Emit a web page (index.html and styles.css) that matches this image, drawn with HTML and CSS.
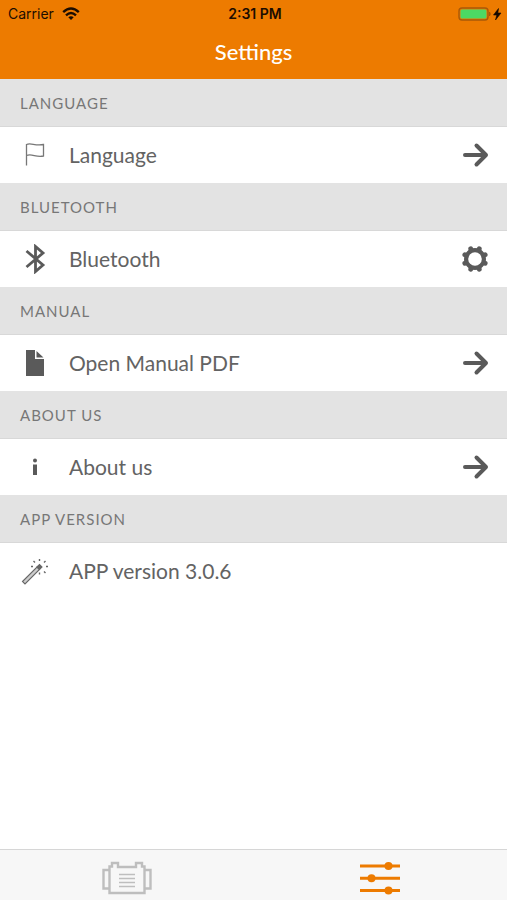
FILE: index.html
```html
<!DOCTYPE html>
<html lang="en">
<head>
<meta charset="utf-8">
<meta name="viewport" content="width=device-width, initial-scale=1">
<title>Settings</title>
<link rel="stylesheet" href="styles.css">
</head>
<body>
<header class="top">
  <div class="status">
    <div class="carrier">
      <span>Carrier</span>
      <svg width="18" height="14" viewBox="0 0 18 14" fill="none" stroke="#1c0d00" stroke-width="2.4"><path d="M1.200 5.200Q9-2 16.800 5.200M4 8.300Q9 3.800 14 8.300"/><path d="M6.300 10.300Q9 8 11.700 10.300L9 13Z" fill="#1c0d00" stroke="none"/></svg>
    </div>
    <time class="clock">2:31 PM</time>
    <div class="power">
      <svg width="44" height="16" viewBox="0 0 44 16"><rect x="1" y="2" width="29" height="12" rx="3" fill="none" stroke="#a85a08" stroke-width="1.4"/><rect x="2.5" y="3.5" width="26" height="9" rx="1.5" fill="#4cd964"/><path d="M31.500 6Q33 8 31.500 10Z" fill="#a85a08" stroke="#a85a08"/><path d="M40.500 2.500L35.500 9H38.800L37.500 14L43 7H39.800Z" fill="#140900" stroke="#140900" stroke-width="0.6"/></svg>
    </div>
  </div>
  <h1 class="title">Settings</h1>
</header>
<main class="content">
  <section>
    <h2 class="heading">LANGUAGE</h2>
    <button class="row" type="button">
      <svg class="icon" viewBox="0 0 28 30" fill="none" stroke="#777" stroke-width="1.3"><path d="M5.500 25.500V4.500C10 2.500 14 6.200 22.500 4.500V16C15 17.700 11 13.300 5.500 15.500"/></svg>
      <span class="label">Language</span>
      <svg class="icon" viewBox="0 0 28 30" fill="none" stroke="#5a5a5a" stroke-width="4" stroke-linecap="round" stroke-linejoin="round"><path d="M4 15H24M15.500 5.500L25 15L15.500 24.500"/></svg>
    </button>
  </section>
  <section>
    <h2 class="heading">BLUETOOTH</h2>
    <button class="row" type="button">
      <svg class="icon" viewBox="0 0 28 30" fill="none" stroke="#5a5a5a" stroke-width="2.8"><path d="M5.500 7L22 21L14.500 27.500V2.500L22 9L5.500 23"/></svg>
      <span class="label">Bluetooth</span>
      <svg class="icon" viewBox="0 0 28 30" fill="none" stroke="#5a5a5a"><circle cx="14" cy="15" r="8.8" stroke-width="4.400"/><path d="M18.200 4.900L9.800 25.100M9.800 4.900L18.200 25.100M3.900 10.800L24.100 19.200M3.900 19.200L24.100 10.800" stroke-width="5" stroke-linecap="round"/><circle cx="14" cy="15" r="6.8" fill="#fff" stroke="none"/></svg>
    </button>
  </section>
  <section>
    <h2 class="heading">MANUAL</h2>
    <button class="row" type="button">
      <svg class="icon" viewBox="0 0 28 30" fill="#5a5a5a"><path d="M5 2H14V11H23V28H5ZM15.500 3L22.500 9.500H15.500Z"/></svg>
      <span class="label">Open Manual PDF</span>
      <svg class="icon" viewBox="0 0 28 30" fill="none" stroke="#5a5a5a" stroke-width="4" stroke-linecap="round" stroke-linejoin="round"><path d="M4 15H24M15.500 5.500L25 15L15.500 24.500"/></svg>
    </button>
  </section>
  <section>
    <h2 class="heading">ABOUT US</h2>
    <button class="row" type="button">
      <svg class="icon" viewBox="0 0 28 30" fill="#5a5a5a"><circle cx="14" cy="8.500" r="2"/><path d="M12 12.500H16V23H12Z"/></svg>
      <span class="label">About us</span>
      <svg class="icon" viewBox="0 0 28 30" fill="none" stroke="#5a5a5a" stroke-width="4" stroke-linecap="round" stroke-linejoin="round"><path d="M4 15H24M15.500 5.500L25 15L15.500 24.500"/></svg>
    </button>
  </section>
  <section>
    <h2 class="heading">APP VERSION</h2>
    <div class="row">
      <svg class="icon" viewBox="0 0 28 30" fill="none" stroke="#666" stroke-width="1.1"><path d="M1.500 25.500L16 11L18.500 13.500L4 28Z" fill="#ccc"/><path d="M16 11L18.500 8.500L21 11L18.500 13.500Z" fill="#666"/><path d="M18.500 3V5M12.500 5L14 6.500M10 10.500H12M24.500 5L23 6.500M25 10.500H27M23 15.500L24.500 17M18.500 16.500V18.500" stroke-width="1.4"/></svg>
      <span class="label">APP version 3.0.6</span>
    </div>
  </section>
</main>
<nav class="tabs">
  <button class="tab" type="button" aria-label="Device">
    <svg width="52" height="36" viewBox="0 0 52 36" fill="none" stroke="#bebebe" stroke-width="2.4"><path d="M8.500 33V6.500H11V3H17V7H35V3H41V6.500H43.500V33ZM8.500 10H2.500V28.500H8.500M43.500 10H49.500V28.500H43.500"/><path d="M18 14.500H34M18 18.500H34M18 22.500H34M18 26.500H34" stroke-width="1.6"/></svg>
  </button>
  <button class="tab" type="button" aria-label="Settings" aria-current="page">
    <svg width="42" height="36" viewBox="0 0 42 36" stroke="#ed7b00" stroke-width="3" fill="#ed7b00"><path d="M1 6H41M1 18.300H41M1 30.500H41"/><g stroke="none"><circle cx="29.500" cy="6" r="4"/><circle cx="12.500" cy="18.300" r="4"/><circle cx="29.500" cy="30.500" r="4"/></g></svg>
  </button>
</nav>
</body>
</html>
```
FILE: styles.css
```css
* {
  box-sizing: border-box;
}

body {
  display: flex;
  flex-direction: column;
  min-height: 100vh;
  margin: 0;
  background: #fff;
  color: #636363;
  font-family: Lato, sans-serif;
}

.top {
  background: #ed7b00;
}

.status {
  display: grid;
  grid-template-columns: 1fr auto 1fr;
  align-items: center;
  height: 27px;
  padding: 0 5px 0 8px;
  color: #1c0d00;
  font: 14px/20px Inter, sans-serif;
}

.carrier {
  display: flex;
  align-items: center;
  gap: 8px;
}

.clock {
  font-weight: 600;
}

.power {
  display: flex;
  justify-content: flex-end;
}

.title {
  height: 52px;
  margin: 0;
  color: #fff;
  font-size: 22px;
  font-weight: 500;
  line-height: 50px;
  text-align: center;
}

.content {
  flex: 1;
}

.heading {
  height: 48px;
  margin: 0;
  padding: 0 20px;
  border-bottom: 1px solid #d8d8d8;
  background: #e3e3e3;
  color: #777;
  font-size: 15px;
  font-weight: 400;
  line-height: 48px;
  letter-spacing: 1px;
}

.row {
  display: flex;
  align-items: center;
  gap: 20px;
  width: 100%;
  height: 56px;
  padding: 0 18px 0 21px;
  border: 0;
  background: #fff;
  color: inherit;
  font: 21px/28px Lato, sans-serif;
  text-align: left;
}

.icon {
  flex: none;
  width: 28px;
  height: 30px;
}

.label {
  flex: 1;
}

.tabs {
  display: flex;
  height: 51px;
  border-top: 1px solid #d6d6d6;
  background: #f7f7f7;
}

.tab {
  display: flex;
  flex: 1;
  align-items: center;
  justify-content: center;
  padding: 6px 0 0;
  border: 0;
  background: none;
}
```
